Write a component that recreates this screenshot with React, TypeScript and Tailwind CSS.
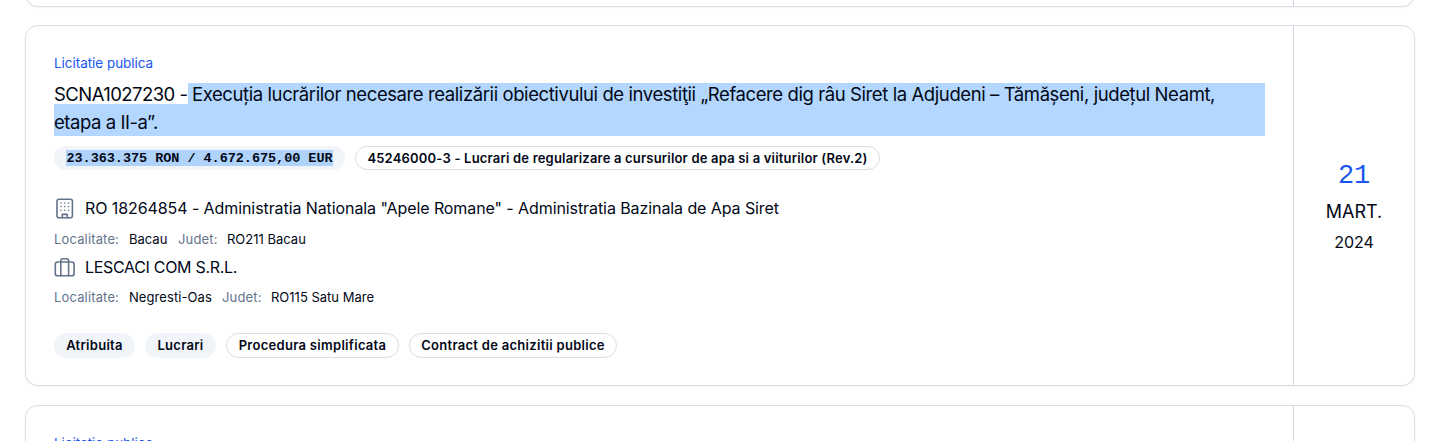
import React from 'react'
import clsx from 'clsx'

interface PillProps {
  children: React.ReactNode
  filled?: boolean
  className?: string
}

const Pill = ({ children, filled, className }: PillProps) => (
  <span
    className={clsx(
      'inline-flex items-center justify-center rounded-full border text-[13px] font-semibold whitespace-nowrap',
      filled ? 'border-transparent bg-[#f1f5f9]' : 'border-[#dadde6] bg-white',
      className
    )}
  >
    {children}
  </span>
)

const BuildingIcon = () => (
  <svg
    width="22"
    height="22"
    viewBox="0 0 22 22"
    fill="none"
    stroke="#64748b"
    strokeWidth="1.6"
    strokeLinecap="round"
    strokeLinejoin="round"
  >
    <rect x="3" y="2.2" width="15.4" height="18.6" rx="2" />
    <path d="M8.3 20.6v-3.2h4.9v3.2" />
    <path d="M7 6h.01M10.8 6h.01M14.6 6h.01M7 9.6h.01M10.8 9.6h.01M14.6 9.6h.01M7 13.2h.01M10.8 13.2h.01M14.6 13.2h.01" />
  </svg>
)

const LuggageIcon = () => (
  <svg
    width="22"
    height="22"
    viewBox="0 0 22 22"
    fill="none"
    stroke="#64748b"
    strokeWidth="1.6"
    strokeLinecap="round"
    strokeLinejoin="round"
  >
    <rect x="1.3" y="6" width="18.8" height="13.8" rx="2.4" />
    <path d="M6.8 19.8V4.6a1.8 1.8 0 0 1 1.8-1.8h4.2a1.8 1.8 0 0 1 1.8 1.8v15.2" />
  </svg>
)

interface LocationProps {
  city: React.ReactNode
  county: React.ReactNode
  className: string
}

const Location = ({ city, county, className }: LocationProps) => (
  <div className={clsx('flex h-5 items-center text-[13px] whitespace-nowrap', className)}>
    <span className="w-[75px] tracking-[0.15px] text-[#64748b]">Localitate:</span>
    {city}
    <span className="w-[49px] tracking-[0.15px] text-[#64748b]">Judet:</span>
    {county}
  </div>
)

const Kind = () => (
  <p className="flex h-5 items-center text-[13.5px] tracking-[-0.04px] text-[#1a56ee]">Licitatie publica</p>
)

interface CardProps {
  className: string
  children?: React.ReactNode
  side?: React.ReactNode
}

const Card = ({ className, children, side }: CardProps) => (
  <article
    className={clsx('flex w-[1390px] shrink-0 rounded-[13px] border border-[#dadde6] bg-white shadow-xs', className)}
  >
    <div className="w-[1267px] pt-[27px] pl-7">{children}</div>
    <div className="flex flex-1 flex-col items-center border-l border-[#d3d7e0]">{side}</div>
  </article>
)

export default function App() {
  return (
    <main className="flex h-[441px] w-[1456px] flex-col overflow-hidden bg-white pl-[25px] font-['Inter',sans-serif] text-[#020817]">
      <div className="flex h-[7px] shrink-0 items-end">
        <Card className="h-7" />
      </div>

      <Card
        className="mt-[18px] h-[361px]"
        side={
          <>
            <span className="mt-[134px] h-8 font-['Liberation_Mono',monospace] text-[27px] leading-8 tracking-[-0.3px] text-[#1a56ee]">
              21
            </span>
            <span className="mt-2 h-6 text-[18px] leading-6">MART.</span>
            <span className="mt-2 h-5 text-[16px] leading-5 tracking-[-0.1px]">2024</span>
          </>
        }
      >
        <Kind />

        <h3 className="mt-[10px] flex h-[53px] w-[1211px] flex-col bg-[#b3d7ff] text-[18.5px] whitespace-nowrap">
          <span className="flex h-[21px]">
            <span className="w-[134px] bg-white leading-[23px] tracking-[-0.55px]">SCNA1027230 -</span>
            <span className="pl-1 leading-[23px] tracking-[-0.41px]">
              Execuția lucrărilor necesare realizării obiectivului de investiţii „Refacere dig râu Siret la Adjudeni – Tămășeni,
              județul Neamt,
            </span>
          </span>
          <span className="leading-[37px] tracking-[-0.45px]">etapa a II-a”.</span>
        </h3>

        <div className="mt-[10px] flex gap-2.5">
          <Pill filled className="h-6 w-[291px]">
            <span className="h-4 bg-[#b0d3fb] font-['Liberation_Mono',monospace] text-[13.5px] leading-[18px] font-bold tracking-[-0.04px]">
              23.363.375 RON / 4.672.675,00 EUR
            </span>
          </Pill>
          <Pill className="h-6 w-[525px] pt-px tracking-[0.19px]">
            45246000-3 - Lucrari de regularizare a cursurilor de apa si a viiturilor (Rev.2)
          </Pill>
        </div>

        <div className="mt-[26px] flex h-6 items-center gap-[9px] text-base whitespace-nowrap">
          <BuildingIcon />
          <span className="tracking-[-0.085px]">
            RO 18264854 - Administratia Nationala "Apele Romane" - Administratia Bazinala de Apa Siret
          </span>
        </div>
        <Location
          className="mt-[10px]"
          city={<span className="w-[49px]">Bacau</span>}
          county={<span>RO211 Bacau</span>}
        />

        <div className="mt-[5px] flex h-6 items-center gap-[9px] text-base whitespace-nowrap">
          <LuggageIcon />
          <span className="tracking-[-0.31px]">LESCACI COM S.R.L.</span>
        </div>
        <Location
          className="mt-[9px]"
          city={<span className="w-[93px] tracking-[0.08px]">Negresti-Oas</span>}
          county={<span>RO115 Satu Mare</span>}
        />

        <div className="mt-[25px] flex gap-2.5 tracking-[0.29px]">
          <Pill filled className="h-[25px] w-[81px]">Atribuita</Pill>
          <Pill filled className="h-[25px] w-[71px]">Lucrari</Pill>
          <Pill className="h-[25px] w-[173px]">Procedura simplificata</Pill>
          <Pill className="h-[25px] w-[208px]">Contract de achizitii publice</Pill>
        </div>
      </Card>

      <Card className="mt-[19px] h-[361px]">
        <Kind />
      </Card>
    </main>
  )
}
